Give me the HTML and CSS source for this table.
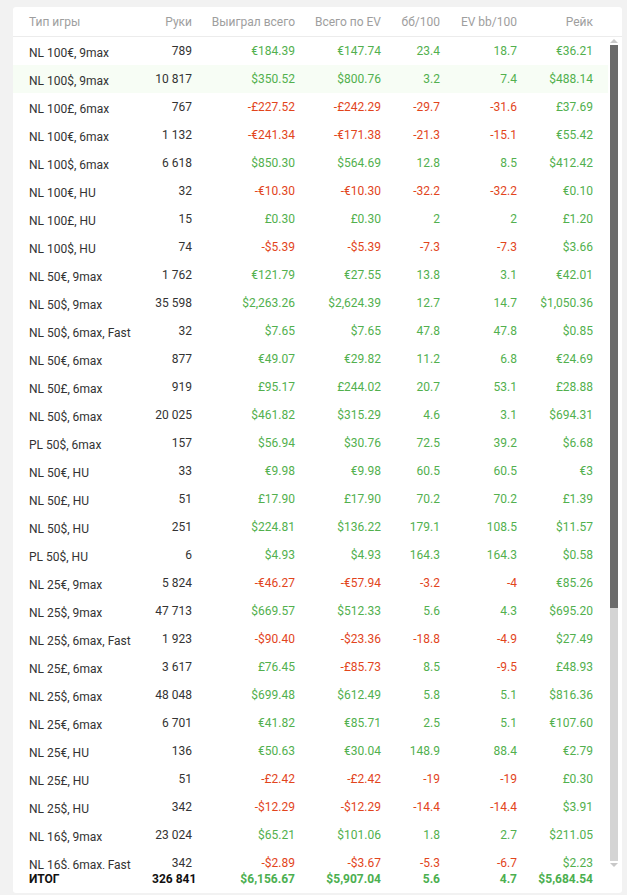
FILE: index.html
```html
<!DOCTYPE html>
<html lang="ru">
<head>
<meta charset="utf-8">
<title>Статистика</title>
<link rel="stylesheet" href="styles.css">
</head>
<body>
<div class="card">
  <div class="row head">
    <div class="c name">Тип игры</div>
    <div class="c">Руки</div>
    <div class="c">Выиграл всего</div>
    <div class="c">Всего по EV</div>
    <div class="c">бб/100</div>
    <div class="c">EV bb/100</div>
    <div class="c">Рейк</div>
  </div>
  <div class="bodywrap">
    <div class="rows">
      <div class="row"><div class="c name">NL 100€, 9max</div><div class="c">789</div><div class="c g">€184.39</div><div class="c g">€147.74</div><div class="c g">23.4</div><div class="c g">18.7</div><div class="c g">€36.21</div></div>
      <div class="row hl"><div class="c name">NL 100$, 9max</div><div class="c">10 817</div><div class="c g">$350.52</div><div class="c g">$800.76</div><div class="c g">3.2</div><div class="c g">7.4</div><div class="c g">$488.14</div></div>
      <div class="row"><div class="c name">NL 100£, 6max</div><div class="c">767</div><div class="c r">-£227.52</div><div class="c r">-£242.29</div><div class="c r">-29.7</div><div class="c r">-31.6</div><div class="c g">£37.69</div></div>
      <div class="row"><div class="c name">NL 100€, 6max</div><div class="c">1 132</div><div class="c r">-€241.34</div><div class="c r">-€171.38</div><div class="c r">-21.3</div><div class="c r">-15.1</div><div class="c g">€55.42</div></div>
      <div class="row"><div class="c name">NL 100$, 6max</div><div class="c">6 618</div><div class="c g">$850.30</div><div class="c g">$564.69</div><div class="c g">12.8</div><div class="c g">8.5</div><div class="c g">$412.42</div></div>
      <div class="row"><div class="c name">NL 100€, HU</div><div class="c">32</div><div class="c r">-€10.30</div><div class="c r">-€10.30</div><div class="c r">-32.2</div><div class="c r">-32.2</div><div class="c g">€0.10</div></div>
      <div class="row"><div class="c name">NL 100£, HU</div><div class="c">15</div><div class="c g">£0.30</div><div class="c g">£0.30</div><div class="c g">2</div><div class="c g">2</div><div class="c g">£1.20</div></div>
      <div class="row"><div class="c name">NL 100$, HU</div><div class="c">74</div><div class="c r">-$5.39</div><div class="c r">-$5.39</div><div class="c r">-7.3</div><div class="c r">-7.3</div><div class="c g">$3.66</div></div>
      <div class="row"><div class="c name">NL 50€, 9max</div><div class="c">1 762</div><div class="c g">€121.79</div><div class="c g">€27.55</div><div class="c g">13.8</div><div class="c g">3.1</div><div class="c g">€42.01</div></div>
      <div class="row"><div class="c name">NL 50$, 9max</div><div class="c">35 598</div><div class="c g">$2,263.26</div><div class="c g">$2,624.39</div><div class="c g">12.7</div><div class="c g">14.7</div><div class="c g">$1,050.36</div></div>
      <div class="row"><div class="c name">NL 50$, 6max, Fast</div><div class="c">32</div><div class="c g">$7.65</div><div class="c g">$7.65</div><div class="c g">47.8</div><div class="c g">47.8</div><div class="c g">$0.85</div></div>
      <div class="row"><div class="c name">NL 50€, 6max</div><div class="c">877</div><div class="c g">€49.07</div><div class="c g">€29.82</div><div class="c g">11.2</div><div class="c g">6.8</div><div class="c g">€24.69</div></div>
      <div class="row"><div class="c name">NL 50£, 6max</div><div class="c">919</div><div class="c g">£95.17</div><div class="c g">£244.02</div><div class="c g">20.7</div><div class="c g">53.1</div><div class="c g">£28.88</div></div>
      <div class="row"><div class="c name">NL 50$, 6max</div><div class="c">20 025</div><div class="c g">$461.82</div><div class="c g">$315.29</div><div class="c g">4.6</div><div class="c g">3.1</div><div class="c g">$694.31</div></div>
      <div class="row"><div class="c name">PL 50$, 6max</div><div class="c">157</div><div class="c g">$56.94</div><div class="c g">$30.76</div><div class="c g">72.5</div><div class="c g">39.2</div><div class="c g">$6.68</div></div>
      <div class="row"><div class="c name">NL 50€, HU</div><div class="c">33</div><div class="c g">€9.98</div><div class="c g">€9.98</div><div class="c g">60.5</div><div class="c g">60.5</div><div class="c g">€3</div></div>
      <div class="row"><div class="c name">NL 50£, HU</div><div class="c">51</div><div class="c g">£17.90</div><div class="c g">£17.90</div><div class="c g">70.2</div><div class="c g">70.2</div><div class="c g">£1.39</div></div>
      <div class="row"><div class="c name">NL 50$, HU</div><div class="c">251</div><div class="c g">$224.81</div><div class="c g">$136.22</div><div class="c g">179.1</div><div class="c g">108.5</div><div class="c g">$11.57</div></div>
      <div class="row"><div class="c name">PL 50$, HU</div><div class="c">6</div><div class="c g">$4.93</div><div class="c g">$4.93</div><div class="c g">164.3</div><div class="c g">164.3</div><div class="c g">$0.58</div></div>
      <div class="row"><div class="c name">NL 25€, 9max</div><div class="c">5 824</div><div class="c r">-€46.27</div><div class="c r">-€57.94</div><div class="c r">-3.2</div><div class="c r">-4</div><div class="c g">€85.26</div></div>
      <div class="row"><div class="c name">NL 25$, 9max</div><div class="c">47 713</div><div class="c g">$669.57</div><div class="c g">$512.33</div><div class="c g">5.6</div><div class="c g">4.3</div><div class="c g">$695.20</div></div>
      <div class="row"><div class="c name">NL 25$, 6max, Fast</div><div class="c">1 923</div><div class="c r">-$90.40</div><div class="c r">-$23.36</div><div class="c r">-18.8</div><div class="c r">-4.9</div><div class="c g">$27.49</div></div>
      <div class="row"><div class="c name">NL 25£, 6max</div><div class="c">3 617</div><div class="c g">£76.45</div><div class="c r">-£85.73</div><div class="c g">8.5</div><div class="c r">-9.5</div><div class="c g">£48.93</div></div>
      <div class="row"><div class="c name">NL 25$, 6max</div><div class="c">48 048</div><div class="c g">$699.48</div><div class="c g">$612.49</div><div class="c g">5.8</div><div class="c g">5.1</div><div class="c g">$816.36</div></div>
      <div class="row"><div class="c name">NL 25€, 6max</div><div class="c">6 701</div><div class="c g">€41.82</div><div class="c g">€85.71</div><div class="c g">2.5</div><div class="c g">5.1</div><div class="c g">€107.60</div></div>
      <div class="row"><div class="c name">NL 25€, HU</div><div class="c">136</div><div class="c g">€50.63</div><div class="c g">€30.04</div><div class="c g">148.9</div><div class="c g">88.4</div><div class="c g">€2.79</div></div>
      <div class="row"><div class="c name">NL 25£, HU</div><div class="c">51</div><div class="c r">-£2.42</div><div class="c r">-£2.42</div><div class="c r">-19</div><div class="c r">-19</div><div class="c g">£0.30</div></div>
      <div class="row"><div class="c name">NL 25$, HU</div><div class="c">342</div><div class="c r">-$12.29</div><div class="c r">-$12.29</div><div class="c r">-14.4</div><div class="c r">-14.4</div><div class="c g">$3.91</div></div>
      <div class="row"><div class="c name">NL 16$, 9max</div><div class="c">23 024</div><div class="c g">$65.21</div><div class="c g">$101.06</div><div class="c g">1.8</div><div class="c g">2.7</div><div class="c g">$211.05</div></div>
      <div class="row"><div class="c name">NL 16$, 6max, Fast</div><div class="c">342</div><div class="c r">-$2.89</div><div class="c r">-$3.67</div><div class="c r">-5.3</div><div class="c r">-6.7</div><div class="c g">$2.23</div></div>
    </div>
    <div class="sbar">
      <div class="arrow up"></div>
      <div class="thumb"></div>
      <div class="track"></div>
      <div class="arrow down"></div>
    </div>
  </div>
  <div class="row foot">
    <div class="c name">ИТОГ</div>
    <div class="c">326 841</div>
    <div class="c g">$6,156.67</div>
    <div class="c g">$5,907.04</div>
    <div class="c g">5.6</div>
    <div class="c g">4.7</div>
    <div class="c g">$5,684.54</div>
  </div>
</div>
</body>
</html>
```

FILE: styles.css
```css
html, body {
  margin: 0;
  padding: 0;
  background: #f2f2f2;
}
body {
  padding: 7px 5px 0 13px;
  font-family: Roboto, "Noto Sans", "Liberation Sans", sans-serif;
  font-size: 12px;
  color: #333;
}
.card {
  background: #fff;
  border-radius: 3px;
  width: 609px;
  height: 886px;
  overflow: hidden;
}
.row {
  display: grid;
  grid-template-columns: 123px 40px 103px 86px 59px 77px 76px;
  padding-left: 16px;
  align-items: center;
  height: 28px;
}
.c {
  text-align: right;
  white-space: nowrap;
}
.c.name {
  text-align: left;
  padding-top: 4px;
}
.head {
  padding-top: 1px;
  box-sizing: border-box;
  height: 30px;
  border-bottom: 1px solid #ececec;
  color: #9e9e9e;
}
.head .c.name {
  padding-top: 0;
}
.bodywrap {
  display: flex;
  height: 832px;
}
.rows {
  width: 595px;
  overflow: hidden;
}
.hl {
  background: #f7fdf5;
}
.g { color: #52b04e; }
.r { color: #e2451c; }
.sbar {
  width: 8px;
  margin-left: 2px;
  display: flex;
  flex-direction: column;
}
.arrow {
  height: 8px;
  display: flex;
  justify-content: center;
  align-items: center;
}
.arrow::before {
  content: "";
  border-left: 4px solid transparent;
  border-right: 4px solid transparent;
}
.arrow.up::before {
  border-bottom: 4px solid #c8c8c8;
}
.arrow.down::before {
  border-top: 4px solid #c8c8c8;
}
.thumb {
  height: 563px;
  background: #6b6b6b;
}
.track {
  flex: 1;
  background: #d4d4d4;
}
.foot {
  height: 20px;
  font-weight: bold;
  color: #111;
}
.foot .c.name {
  padding-top: 0;
}
.foot .g { color: #4caf50; }
```
